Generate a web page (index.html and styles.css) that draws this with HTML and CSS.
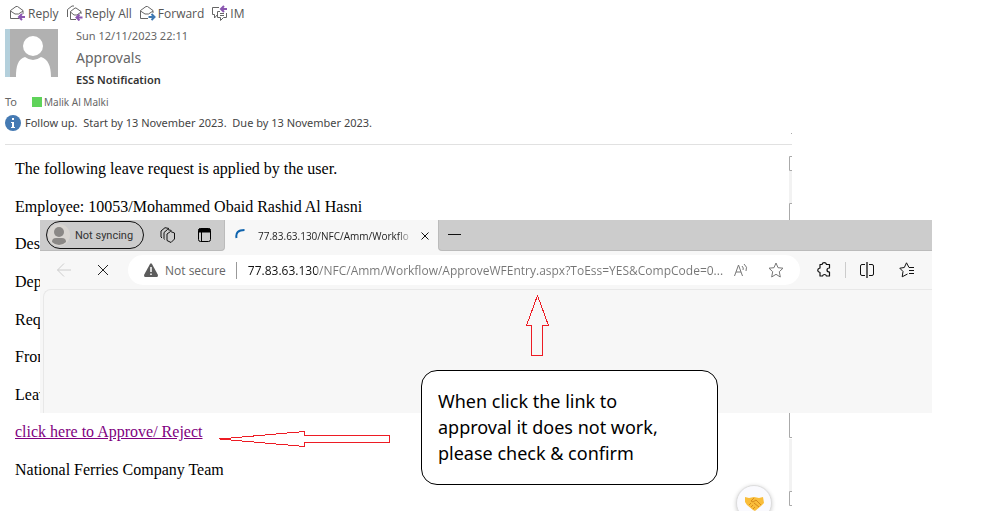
FILE: index.html
```
<!DOCTYPE html>
<html lang="en">
<head>
    <meta charset="UTF-8">
    <meta name="viewport" content="width=device-width, initial-scale=1.0">
    <title>Approvals - ESS Notification</title>
    <link rel="stylesheet" href="styles.css">
</head>
<body>
    <main class="mail">
        <nav class="actions">
            <button type="button">
                <svg width="17" height="16" viewBox="0 0 17 16" fill="none" stroke="#666"><path d="M10 13.500H1.500V5.500L7 1.500L8.500 1.500L14 5.500V9M1.500 6L6 9H9.500L14 6"/><path d="M16 12H10.500M13 9L10 12L13 15" stroke="#8a56b0" stroke-width="2"/></svg>
                Reply
            </button>
            <button type="button">
                <svg width="17" height="16" viewBox="0 0 17 16" fill="none" stroke="#666"><path d="M1.500 12V4.500L6 1H8M10 14.500H4.500V6.500L9 3L10 3L15 6.500V9M4.500 7L8 10H11L15 7"/><path d="M16.500 12.500H11M13.500 9.500L10.500 12.500L13.500 15.500" stroke="#8a56b0" stroke-width="2"/></svg>
                Reply All
            </button>
            <button type="button">
                <svg width="17" height="16" viewBox="0 0 17 16" fill="none" stroke="#666"><path d="M9 13.500H1.500V5.500L7 1.500L8.500 1.500L14 5.500V8M1.500 6L6 9H9.500L14 6"/><path d="M9.500 12H15M12.500 9L15.500 12L12.500 15" stroke="#3e78b2" stroke-width="2"/></svg>
                Forward
            </button>
            <button type="button">
                <svg width="17" height="16" viewBox="0 0 17 16" fill="none" stroke="#666"><path d="M8 2.500H1.500V9.500H3.500V13L6.500 9.500M9 6.500H6.500V12.500H9.500V15.500L12.500 12.500H15.500V8M9 8.500H13M9 10.500H13"/><path d="M16 4H10.500M13 1L10 4L13 7" stroke="#8a56b0" stroke-width="2"/></svg>
                IM
            </button>
        </nav>

        <header class="sender">
            <svg class="avatar" width="53" height="48" viewBox="0 0 53 48"><path d="M0 0H53V48H0Z" fill="#b1b1b1"/><path d="M0 0H5V48H0Z" fill="#b4d0dc"/><circle cx="28" cy="17" r="10" fill="#fff"/><path d="M11 48C11 37 13 30 20 28Q28 34 36 28C43 30 46 37 46 48Z" fill="#fff"/></svg>
            <div class="sender-text">
                <time datetime="2023-11-12T22:11">Sun 12/11/2023 22:11</time>
                <span class="from">Approvals</span>
                <h1>ESS Notification</h1>
            </div>
        </header>

        <div class="to"><span class="to-label">To</span><i class="presence"></i><span class="recipient">Malik Al Malki</span></div>
        <div class="follow">
            <svg width="16" height="16" viewBox="0 0 16 16"><circle cx="8" cy="8" r="8" fill="#457ab3"/><path d="M7 3H9V5H7ZM6 7H9V12H10V13H6V12H7V8H6Z" fill="#fff"/></svg>
            <span>Follow up.&nbsp; Start by 13 November 2023.&nbsp; Due by 13 November 2023.</span>
        </div>

        <article class="message">
            <p>The following leave request is applied by the user.</p>
            <p>Employee: 10053/Mohammed Obaid Rashid Al Hasni</p>
            <p>Des</p>
            <p>Dep</p>
            <p>Req</p>
            <p>From</p>
            <p>Leav</p>
            <p><a href="#approve">click here to Approve/ Reject</a></p>
            <p>National Ferries Company Team</p>
        </article>
    </main>

    <!-- remains of the pane scrollbar -->
    <svg class="scroll-marks" width="3" height="376" viewBox="0 0 3 376" fill="none" stroke="#aaa"><path d="M0 39H3V71H0ZM0 307H3V359H0Z" fill="#f2f2f2" stroke="none"/><path d="M2 1.500H3M3 24.500H.5V38.500H3M3 71.500H.5V305.500H3M3 359.500H.5V373.500H3"/></svg>

    <section class="browser">
        <div class="tabs">
            <div class="tab-tools">
                <button type="button" class="profile">
                    <svg width="22" height="22" viewBox="0 0 22 22"><circle cx="11" cy="11" r="11" fill="#d8d5d1"/><circle cx="11" cy="8" r="5" fill="#8a8886"/><path d="M4 18Q4 14 8 14H14Q18 14 18 18Q15 21 11 21Q7 21 4 18Z" fill="#8a8886"/></svg>
                    Not syncing
                </button>
                <button type="button" aria-label="Workspaces">
                    <svg width="16" height="16" viewBox="0 0 16 16" fill="none" stroke="#111" stroke-linejoin="round"><path d="M7 7L10.500 4.500L14.500 6V12L11 15.500L7 13.500ZM4.500 12.500L4 11.500V5.500L7.500 2.500L11.500 3.500M2 11L1 10V4L5 .7L9 1.500"/></svg>
                </button>
                <button type="button" aria-label="Tab actions">
                    <svg width="14" height="14" viewBox="0 0 14 14" fill="none" stroke="#000"><rect x=".5" y=".5" width="12" height="13" rx="2"/><path d="M1 1H12V4H1Z" fill="#000"/><path d="M3.500 4V13"/></svg>
                </button>
            </div>
            <div class="tab">
                <svg class="spinner" width="12" height="12" viewBox="0 0 12 12" fill="none" stroke="#0e63ad" stroke-width="2"><path d="M1.500 10Q0 2 9.500 2"/></svg>
                <span class="tab-title">77.83.63.130/NFC/Amm/Workflo</span>
                <button type="button" aria-label="Close tab"><svg width="8" height="8" viewBox="0 0 8 8" stroke="#111"><path d="M.5 .5L7.500 7.500M7.500 .5L.5 7.500"/></svg></button>
            </div>
            <div class="tab-rest"><svg width="13" height="2" viewBox="0 0 13 2"><path d="M0 .5H13" stroke="#111"/></svg></div>
        </div>

        <div class="toolbar">
            <button type="button" aria-label="Back"><svg width="14" height="14" viewBox="0 0 14 14" fill="none" stroke="#ccc"><path d="M14 7H.5M7 .5L.5 7L7 13.500"/></svg></button>
            <button type="button" aria-label="Stop"><svg width="12" height="12" viewBox="0 0 12 12" stroke="#222"><path d="M1 1L11 11M11 1L1 11"/></svg></button>
            <div class="address">
                <svg width="14" height="14" viewBox="0 0 14 14"><path d="M6 1Q7-.5 8 1L14 12Q14 14 13 14H1Q0 14 0 12Z" fill="#5c5c5c"/><path d="M7 4V9M7 10.500V12" stroke="#fff" stroke-width="1.500"/></svg>
                <label for="url">Not secure</label>
                <input id="url" type="text" value="77.83.63.130/NFC/Amm/Workflow/ApproveWFEntry.aspx?ToEss=YES&amp;CompCode=0...">
                <button type="button" aria-label="Read aloud"><svg width="14" height="14" viewBox="0 0 14 14" fill="none" stroke="#777"><path d="M.5 13L4.500 2L8.500 13M2 9H7M8 3Q10 5 9 7M10 1Q14 4 12 8"/></svg></button>
                <button type="button" aria-label="Add to favourites"><svg width="16" height="16" viewBox="0 0 16 16" fill="none" stroke="#777" stroke-linejoin="round"><path d="M8 1L10 5.700L15 6.200L11.300 9.700L12.300 15L8 12.300L3.700 15L4.700 9.700L1 6.200L6 5.700Z"/></svg></button>
            </div>
            <div class="tools">
                <button type="button" aria-label="Extensions"><svg width="14" height="16" viewBox="0 0 14 16" fill="none" stroke="#111" stroke-width="1.200" stroke-linejoin="round"><path d="M3 2.500H5Q5.500 .7 7.200 .7Q9 .7 9.500 2.500H12.500V6Q10 6 10 8Q10 10 12.500 10V14H9.500Q9 12.500 7.500 12.500Q6 12.500 5.500 14H3V10.500Q.7 10 .7 8.300Q.7 6.500 3 6Z"/></svg></button>
                <i class="divider"></i>
                <button type="button" aria-label="Split screen"><svg width="14" height="16" viewBox="0 0 14 16" fill="none" stroke="#111"><path d="M5 2.500H2Q.5 2.500 .5 4V12Q.5 13.500 2 13.500H5M9 2.500H12Q13.500 2.500 13.500 4V12Q13.500 13.500 12 13.500H9"/><path d="M7 0V16" stroke-width="1.300"/></svg></button>
                <button type="button" aria-label="Favourites"><svg width="16" height="16" viewBox="0 0 16 16" fill="none" stroke="#111" stroke-linejoin="round"><path d="M10 5.500L7.500 .8L5.300 5.500L.8 6.200L4 9.500L3.200 14.800L8.500 12M10 5.500H15M10 8.500H15M10 11.500H15"/></svg></button>
            </div>
        </div>
        <div class="page"></div>
    </section>

    <svg class="arrow-up" width="24" height="62" viewBox="0 0 24 62" fill="none" stroke="#ed1c24" shape-rendering="crispEdges"><path d="M11.500 .5L.5 30.500H5.500V60.500H16.500V30.500H22.500Z"/></svg>
    <svg class="arrow-left" width="172" height="17" viewBox="0 0 172 17" fill="none" stroke="#ed1c24" shape-rendering="crispEdges"><path d="M.5 8L85.500 .5V4.500H170.500V11.500H85.500V15.500L.5 8"/></svg>

    <div class="callout">When click the link to<br>approval it does not work,<br>please check &amp; confirm</div>

    <button type="button" class="reaction" aria-label="React">
        <svg width="19" height="15" viewBox="0 0 19 15"><path d="M0 1L4 2L9 1L14 2L18 1L19 7L16 10L10 15L8 14L2 9L0 6Z" fill="#f9bd3a"/><path d="M9 2L6 5L8 6L11 4L16 9M4 9L6 7M6 11L8 9M8 13L10 11M9 7L14 11" fill="none" stroke="#d68a1c"/></svg>
    </button>
</body>
</html>
```
FILE: styles.css
```
* {
    box-sizing: border-box;
}
body {
    position: relative;
    margin: 0;
    min-height: 100vh;
    overflow: hidden;
    background: white;
    font-family: "Noto Sans", "Open Sans", sans-serif;
    font-size: 11px;
    color: #444;
}
button {
    display: flex;
    align-items: center;
    padding: 0;
    border: none;
    background: none;
    color: inherit;
    font: inherit;
    cursor: pointer;
}
svg {
    display: block;
    flex: none;
}
.mail {
    padding: 5px 5px 0;
}
.actions {
    display: flex;
    gap: 7px;
    padding-left: 4px;
    height: 16px;
    font-family: "Open Sans", sans-serif;
    font-size: 12px;
    color: #555;
}
.actions button {
    gap: 2px;
}
.sender {
    display: flex;
    gap: 18px;
    padding-top: 7px;
}
.avatar {
    margin-top: 1px;
}
.sender-text {
    display: flex;
    flex-direction: column;
    line-height: 16px;
    color: #666;
}
.from {
    font-size: 14px;
    line-height: 28px;
}
h1 {
    margin: 0;
    font-size: 11px;
    line-height: 16px;
    font-weight: 600;
    color: #333;
}
.to {
    display: flex;
    align-items: center;
    line-height: 16px;
    margin-top: 6px;
    color: #666;
}
.to-label {
    width: 27px;
}
.presence {
    width: 10px;
    height: 10px;
    margin-right: 2px;
    background: #5fd35a;
}
.recipient {
    font-size: 10px;
}
.follow {
    display: flex;
    align-items: center;
    gap: 4px;
    margin-top: 5px;
    line-height: 16px;
}
.message {
    display: grid;
    align-content: space-between;
    width: 80%;
    max-width: 787px;
    min-height: 335px;
    margin-top: 13px;
    padding: 15px 10px 0;
    border-top: 1px solid #e1e1e1;
    font-family: "Liberation Serif", serif;
    font-size: 16px;
    line-height: 18px;
    color: black;
}
.message p {
    margin: 0;
}
.message a {
    color: purple;
}
.scroll-marks {
    position: absolute;
    left: 789px;
    top: 132px;
}

/* browser window */
.browser {
    position: absolute;
    left: 40px;
    top: 220px;
    width: 892px;
    background: #f7f7f7;
}
.tabs {
    display: flex;
    height: 31px;
    background: #f7f7f7;
    color: #333;
    font-family: Roboto, sans-serif;
}
.tab-tools {
    display: flex;
    align-items: center;
    gap: 16px;
    width: 185px;
    padding-left: 6px;
    background: #ccc;
    border-bottom: 1px solid #bbb;
    border-right: 1px solid #bbb;
    border-bottom-right-radius: 4px;
}
.tab-tools button + button + button {
    margin-left: 6px;
}
.tab-tools .profile {
    gap: 5px;
    width: 98px;
    height: 28px;
    padding-left: 1px;
    border: 1px solid #111;
    border-radius: 14px;
    white-space: nowrap;
    font-size: 11px;
}
.tab {
    display: flex;
    align-items: center;
    width: 213px;
    padding: 0 9px 0 10px;
}
.spinner {
    margin-bottom: 3px;
}
.tab-title {
    flex: 1;
    margin-left: 11px;
    margin-right: 8px;
    white-space: nowrap;
    font-family: "Open Sans", sans-serif;
    font-size: 10px;
    color: #222;
    mask-image: linear-gradient(to right, #000 90%, transparent);
}
.tab-rest {
    display: flex;
    flex: 1;
    align-items: center;
    padding-left: 9px;
    background: #ccc;
    border-left: 1px solid #bbb;
    border-bottom: 1px solid #bbb;
    border-bottom-left-radius: 4px;
}
.toolbar {
    display: flex;
    align-items: center;
    gap: 26px;
    height: 38px;
    padding-left: 17px;
}
.address {
    display: flex;
    flex: none;
    align-items: center;
    width: 672px;
    height: 30px;
    margin-left: -7px;
    padding: 0 16px;
    border-radius: 15px;
    background: white;
    font-family: "Open Sans", sans-serif;
    font-size: 12px;
}
.address label {
    margin-left: 7px;
    padding-right: 10px;
    border-right: 1px solid #999;
    color: #666;
}
.address input {
    flex: 1;
    min-width: 0;
    padding: 0 0 0 11px;
    border: none;
    outline: none;
    /* host is darker than the path */
    background: linear-gradient(to right, #111 80px, #757575 80px);
    background-clip: text;
    -webkit-background-clip: text;
    color: transparent;
    font: inherit;
}
.address button {
    margin-left: 10px;
}
.address button + button {
    margin-left: 20px;
}
.tools {
    display: flex;
    align-items: center;
    gap: 14px;
    margin-left: -9px;
}
.divider {
    width: 1px;
    height: 16px;
    background: #ccc;
}
.tools button:last-child {
    margin-left: 11px;
}
.page {
    min-height: 124px;
    margin-left: 3px;
    border-top: 1px solid #e8e8e8;
    border-left: 1px solid #e8e8e8;
    border-top-left-radius: 8px;
}

/* annotations */
.arrow-up {
    position: absolute;
    left: 526px;
    top: 295px;
}
.arrow-left {
    position: absolute;
    left: 219px;
    top: 431px;
}
.callout {
    position: absolute;
    left: 421px;
    top: 370px;
    width: 297px;
    padding: 17px 16px 18px;
    border: 1px solid black;
    border-radius: 16px;
    background: white;
    font-size: 18px;
    line-height: 26px;
    color: black;
}
.reaction {
    position: absolute;
    left: 736px;
    top: 485px;
    justify-content: center;
    width: 36px;
    height: 36px;
    border: 1px solid #ddd;
    border-radius: 18px;
    background: #fafafe;
    box-shadow: 0 1px 4px rgba(0,0,0,0.2);
}
```
